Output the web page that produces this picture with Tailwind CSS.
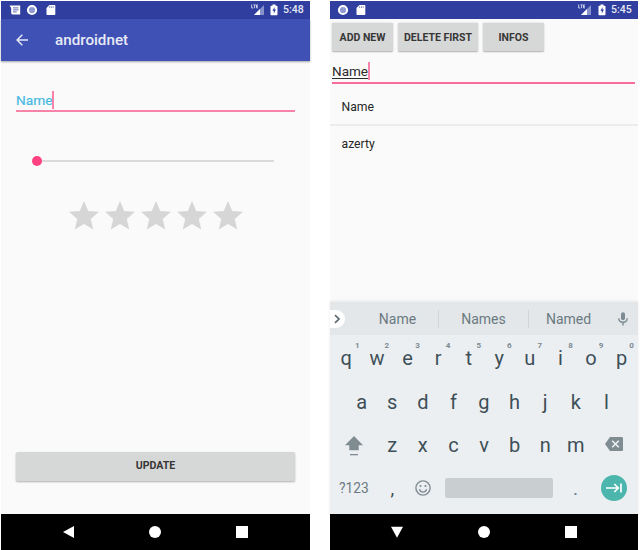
<!DOCTYPE html>
<html lang="en">
<head>
<meta charset="utf-8">
<title>androidnet</title>
<script src="https://cdn.jsdelivr.net/npm/@tailwindcss/browser@4"></script>
</head>
<body class="w-[640px] h-[550px] overflow-hidden bg-white font-[Roboto,sans-serif]">
<svg class="hidden">
  <symbol id="ring" viewBox="0 0 12 12"><circle cx="6" cy="6" r="4.1" fill="#8f99d2" stroke="#fff" stroke-width="2"/></symbol>
  <symbol id="sd" viewBox="0 0 10 12"><path d="M3.4 1H8.600q.7 0 .7.7v8.600q0 .7-.7.700H1.200q-.7 0-.7-.7V3.900z" fill="#fff"/><path d="M3.600 2.200v1.800M5.400 2.200v1.800M7.200 2.200v1.800" stroke="#6c78bf" stroke-width=".8"/></symbol>
  <symbol id="signal" viewBox="0 0 14 12"><path d="M13 1v10H3z" fill="#8791cc"/><path d="M9 5v6H3z" fill="#fff"/><path d="M.7.500v3.500h1.600M2.500.900h2.200M3.600.900v3.300M7 .900H5.500v3H7M5.500 2.400H7" fill="none" stroke="#d8dcf0" stroke-width=".9"/></symbol>
  <symbol id="battery" viewBox="0 0 8 12"><path d="M2.500.500h3v1.200h1.300q.7 0 .7.700v8q0 .8-.7.800H1.200q-.7 0-.7-.8v-8q0-.7.700-.7h1.300z" fill="#fff"/><path d="M4.600 3 2.400 6.800h1.400v2.600l2.200-3.900H4.600z" fill="#303f9f"/></symbol>
  <symbol id="star" viewBox="0 0 24 24"><path d="M12 17.270 18.180 21l-1.640-7.030L22 9.240l-7.190-.61L12 2 9.190 8.630 2 9.240l5.460 4.730L5.820 21z" fill="#d6d6d6"/></symbol>
</svg>

<main class="flex gap-5 pl-px pt-px">
  <section class="flex h-[549px] w-[309px] flex-col bg-[#fafafa]">
    <div class="flex h-[18px] shrink-0 items-center bg-[#303f9f] pl-[8px] pr-[6px]">
      <svg class="h-[12px] w-[12px]" viewBox="0 0 12 12"><path d="M.500 1.500h10.700v9H3.300L2.200 9.500V4z" fill="#fff"/><path d="M4 3.900h5.500M4 5.900h5.500M4 7.900h3.700" stroke="#4a57aa" stroke-width=".9"/></svg>
      <svg class="ml-[5px] h-[12px] w-[12px]"><use href="#ring"/></svg>
      <svg class="ml-[8px] h-[12px] w-[10px]"><use href="#sd"/></svg>
      <svg class="ml-auto h-[12px] w-[14px]"><use href="#signal"/></svg>
      <svg class="ml-[5px] h-[12px] w-[8px]"><use href="#battery"/></svg>
      <span class="ml-[5px] w-[21px] whitespace-nowrap pt-px text-[10.500px] font-medium leading-none text-[#e4e7f4]">5:48</span>
    </div>
    <header class="flex h-[42px] shrink-0 items-center bg-[#3f51b5] pl-[15px] shadow-[0_1px_2px_rgba(0,0,0,0.35)]">
      <svg class="h-[12px] w-[12px]" viewBox="0 0 12 12" fill="none" stroke="#e3e6f4" stroke-width="1.500"><path d="M12 6H1.200M6.300.800 1.100 6l5.200 5.200"/></svg>
      <h1 class="ml-[27px] pt-[2px] text-[15.200px] font-medium leading-none text-[#e8eaf6]">androidnet</h1>
    </header>
    <div class="flex grow flex-col px-[15px]">
      <div class="mt-[30px] flex h-[21px] items-start border-b-2 border-[#f784a8]">
        <span class="mt-px text-[13.700px] leading-[17px] text-[#45b9e3] [-webkit-text-stroke:0.2px_#45b9e3]">Name</span>
        <span class="h-[18px] w-[2px] bg-[#f784a8]"></span>
      </div>
      <div class="mt-[44px] flex h-[10px] items-center pl-[16px]">
        <span class="h-[10px] w-[10px] rounded-full bg-[#ff4081]"></span>
        <span class="h-[2px] w-[232px] bg-[#dadada]"></span>
      </div>
      <div class="mt-[32px] flex justify-center">
        <svg class="h-[36px] w-[36px]"><use href="#star"/></svg>
        <svg class="h-[36px] w-[36px]"><use href="#star"/></svg>
        <svg class="h-[36px] w-[36px]"><use href="#star"/></svg>
        <svg class="h-[36px] w-[36px]"><use href="#star"/></svg>
        <svg class="h-[36px] w-[36px]"><use href="#star"/></svg>
      </div>
      <button class="mb-[33px] mt-auto h-[29px] rounded-[1.500px] bg-[#d6d7d7] text-[10.600px] font-bold leading-none text-[#363636] shadow-[0_1px_2px_rgba(0,0,0,0.3)]">UPDATE</button>
    </div>
    <nav class="flex h-[36px] shrink-0 items-center bg-black pl-[61px]">
      <svg class="h-[14px] w-[12px]" viewBox="0 0 12 14"><path d="M12 1v12L1 7z" fill="#fff"/></svg>
      <span class="ml-[75px] h-[12px] w-[12px] rounded-full bg-white"></span>
      <span class="ml-[75px] h-[12px] w-[12px] bg-white"></span>
    </nav>
  </section>

  <section class="flex h-[549px] w-[308px] flex-col bg-[#fafafa]">
    <div class="flex h-[18px] shrink-0 items-center bg-[#303f9f] pl-[7px] pr-[6px]">
      <svg class="h-[12px] w-[12px]"><use href="#ring"/></svg>
      <svg class="ml-[7px] h-[12px] w-[10px]"><use href="#sd"/></svg>
      <svg class="ml-auto h-[12px] w-[14px]"><use href="#signal"/></svg>
      <svg class="ml-[6px] h-[12px] w-[8px]"><use href="#battery"/></svg>
      <span class="ml-[5px] w-[21px] whitespace-nowrap pt-px text-[10.500px] font-medium leading-none text-[#e4e7f4]">5:45</span>
    </div>
    <div class="mt-[4px] flex h-[28px] shrink-0 gap-[5px] pl-[2px] text-[10.500px] font-bold leading-none text-[#363636]">
      <button class="w-[61px] whitespace-nowrap rounded-[1.500px] bg-[#d6d7d7] pt-[2px] shadow-[0_0.500px_1.500px_rgba(0,0,0,0.3)]">ADD NEW</button>
      <button class="w-[80px] whitespace-nowrap rounded-[1.500px] bg-[#d6d7d7] pt-[2px] shadow-[0_0.500px_1.500px_rgba(0,0,0,0.3)]">DELETE FIRST</button>
      <button class="w-[61px] whitespace-nowrap rounded-[1.500px] bg-[#d6d7d7] pt-[2px] shadow-[0_0.500px_1.500px_rgba(0,0,0,0.3)]">INFOS</button>
    </div>
    <div class="ml-[2px] mr-[3px] mt-[11px] flex h-[22px] shrink-0 items-start border-b-2 border-[#f96c9a]">
      <span class="mt-px text-[13.500px] leading-[17px] text-[#2b2b2b] underline decoration-1 underline-offset-[2px]">Name</span>
      <span class="h-[18px] w-[2px] bg-[#f784a8]"></span>
    </div>
    <div class="flex h-[42px] shrink-0 items-center border-b-2 border-[#ececec] pl-[11.500px] pt-[7px] text-[12.200px] text-[#262626]">Name</div>
    <div class="flex h-[37px] shrink-0 items-center pl-[11.500px] text-[12.200px] text-[#262626]">azerty</div>

    <div class="mt-auto h-[212px] shrink-0 bg-[#ebeff2] text-[#3e4f58] shadow-[0_-1px_3px_rgba(0,0,0,0.08)]">
      <div class="flex h-[33px] items-center bg-[#e3e7ea] text-[14px] leading-none text-[#6b7a81]">
        <span class="flex h-[18px] w-[15px] items-center justify-center rounded-r-full bg-white">
          <svg class="h-[10px] w-[7px]" viewBox="0 0 7 10" fill="none" stroke="#5b6b73" stroke-width="1.700"><path d="m1 1.200 4 3.800-4 3.800"/></svg>
        </span>
        <span class="ml-[12px] w-[81px] pt-px text-center">Name</span>
        <span class="h-[18px] w-px bg-[#cfd5d8]"></span>
        <span class="w-[89px] pt-px text-center">Names</span>
        <span class="h-[18px] w-px bg-[#cfd5d8]"></span>
        <span class="w-[79px] pt-px text-center">Named</span>
        <svg class="ml-[10px] h-[14px] w-[10px]" viewBox="0 0 10 14"><rect x="3" y=".3" width="4" height="8" rx="2" fill="#7d8b92"/><path d="M.8 6.200c0 5.300 8.400 5.300 8.400 0M5 10.200v3.300" fill="none" stroke="#7d8b92" stroke-width="1.400"/></svg>
      </div>

      <div class="flex h-[45px] w-[307px] pl-px pt-[11px] text-center text-[20px] leading-[24px]">
        <span class="relative flex-1">q<sup class="absolute left-[24px] -top-[5px] text-[8px] font-bold leading-[10px] text-[#7d8b92]">1</sup></span>
        <span class="relative flex-1">w<sup class="absolute left-[23px] -top-[5px] text-[8px] font-bold leading-[10px] text-[#7d8b92]">2</sup></span>
        <span class="relative flex-1">e<sup class="absolute left-[23px] -top-[5px] text-[8px] font-bold leading-[10px] text-[#7d8b92]">3</sup></span>
        <span class="relative flex-1">r<sup class="absolute left-[23px] -top-[5px] text-[8px] font-bold leading-[10px] text-[#7d8b92]">4</sup></span>
        <span class="relative flex-1">t<sup class="absolute left-[23px] -top-[5px] text-[8px] font-bold leading-[10px] text-[#7d8b92]">5</sup></span>
        <span class="relative flex-1">y<sup class="absolute left-[23px] -top-[5px] text-[8px] font-bold leading-[10px] text-[#7d8b92]">6</sup></span>
        <span class="relative flex-1">u<sup class="absolute left-[23px] -top-[5px] text-[8px] font-bold leading-[10px] text-[#7d8b92]">7</sup></span>
        <span class="relative flex-1">i<sup class="absolute left-[23px] -top-[5px] text-[8px] font-bold leading-[10px] text-[#7d8b92]">8</sup></span>
        <span class="relative flex-1">o<sup class="absolute left-[23px] -top-[5px] text-[8px] font-bold leading-[10px] text-[#7d8b92]">9</sup></span>
        <span class="relative flex-1">p<sup class="absolute left-[23px] -top-[5px] text-[8px] font-bold leading-[10px] text-[#7d8b92]">0</sup></span>
      </div>
      <div class="flex h-[44px] w-[307px] pl-[16.300px] pr-[15.300px] pt-[10px] text-center text-[20px] leading-[24px]">
        <span class="flex-1">a</span><span class="flex-1">s</span><span class="flex-1">d</span><span class="flex-1">f</span><span class="flex-1">g</span><span class="flex-1">h</span><span class="flex-1">j</span><span class="flex-1">k</span><span class="flex-1">l</span>
      </div>
      <div class="flex h-[43px] w-[307px] pl-px pt-[9px] text-center text-[20px] leading-[24px]">
        <span class="flex w-[45.900px] justify-center pt-[3px]"><svg class="h-[20px] w-[18px]" viewBox="0 0 18 20" fill="#7f8c92"><path d="M9 0 18 9.200h-4.300v5H4.300v-5H0z"/><path d="M5 18h8v1.300H5z"/></svg></span>
        <span class="flex-1">z</span><span class="flex-1">x</span><span class="flex-1">c</span><span class="flex-1">v</span><span class="flex-1">b</span><span class="flex-1">n</span><span class="flex-1">m</span>
        <span class="flex w-[45.900px] justify-center pt-[4px]"><svg class="h-[14px] w-[18px]" viewBox="0 0 18 14"><path d="M5 0h11.800Q18 0 18 1.200v11.600q0 1.200-1.200 1.200H5L0 7z" fill="#7f8c92"/><path d="m7.200 3.700 6.600 6.600M13.800 3.700l-6.600 6.600" stroke="#ebeff2" stroke-width="1.600"/></svg></span>
      </div>
      <div class="flex h-[42px] w-[307px] items-center pl-px">
        <span class="w-[46px] text-center text-[13.800px] text-[#6b7a81]">?123</span>
        <span class="w-[30.600px] text-center text-[19px] leading-none">,</span>
        <span class="flex w-[30.600px] justify-center"><svg class="h-[16px] w-[16px]" viewBox="0 0 16 16" fill="none" stroke="#7f8c92"><circle cx="8" cy="8" r="7.100" stroke-width="1.400"/><path d="M4.300 9.300c1.500 3.700 5.900 3.700 7.400 0" stroke-width="1.300"/><circle cx="5.500" cy="6" r="1.100" fill="#7f8c92" stroke="none"/><circle cx="10.500" cy="6" r="1.100" fill="#7f8c92" stroke="none"/></svg></span>
        <span class="ml-[7px] h-[20px] w-[108px] rounded-[2px] bg-[#c9ced1]"></span>
        <span class="ml-[7px] w-[30.600px] text-center text-[19px] leading-none text-[#6b7a81]">.</span>
        <span class="ml-[10px] flex h-[26px] w-[26px] shrink-0 items-center justify-center rounded-full bg-[#4db6ac]"><svg class="h-[10px] w-[16px]" viewBox="0 0 16 10" fill="none" stroke="#fff" stroke-width="1.700"><path d="M0 5h12M8.300 1l4 4-4 4M15 .500v9"/></svg></span>
      </div>
    </div>
    <nav class="flex h-[36px] shrink-0 items-center bg-black pl-[60px]">
      <svg class="h-[12px] w-[14px]" viewBox="0 0 14 12"><path d="M1 .800h12L7 11.800z" fill="#fff"/></svg>
      <span class="ml-[74px] h-[12px] w-[12px] rounded-full bg-white"></span>
      <span class="ml-[75px] h-[12px] w-[12px] bg-white"></span>
    </nav>
  </section>
</main>
</body>
</html>
